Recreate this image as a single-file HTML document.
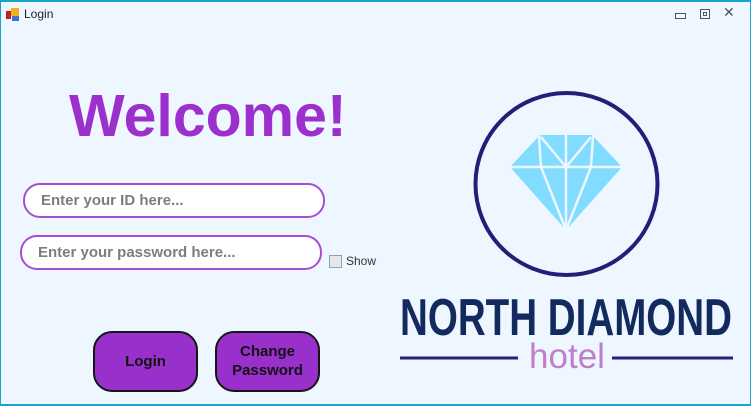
<!DOCTYPE html>
<html><head><style>
body{margin:0;width:751px;height:406px;overflow:hidden;background:#eef7ff;font-family:"Liberation Sans",sans-serif;position:relative}
.frame{position:absolute;inset:0;border:1px solid #19a3cf;border-top:2px solid #19a3cf;border-bottom:2px solid #19a3cf;box-sizing:border-box}
.a{position:absolute}
.inp{position:absolute;width:298px;height:31px;border:2px solid #a24fd3;border-radius:17px;background:#fff;box-sizing:content-box}
.inp span{position:absolute;left:16px;top:7px;color:#7d7d7d;font-weight:bold;font-size:15px}
.btn{position:absolute;width:101px;height:57px;border:2px solid #151515;border-radius:19px;background:#9a30cc;color:#111;font-weight:bold;font-size:15px;text-align:center;box-sizing:content-box}
</style></head><body>
<div class="frame"></div>
<div class="a" style="left:6px;top:8px;width:14px;height:14px">
<div class="a" style="left:0;top:3px;width:5px;height:8px;background:#c02020"></div>
<div class="a" style="left:5px;top:0;width:8px;height:8px;background:#f0b020"></div>
<div class="a" style="left:6px;top:8px;width:7px;height:5px;background:#4070d0"></div>
</div>
<div class="a" style="left:24px;top:7px;font-size:12px;color:#222">Login</div>
<div class="a" style="left:675px;top:13px;width:9px;height:4px;border:1px solid #555"></div>
<div class="a" style="left:700px;top:9px;width:8px;height:8px;border:1px solid #555"><div class="a" style="left:2px;top:2px;width:2px;height:2px;border:1px solid #555"></div></div>
<div class="a" style="left:723px;top:4px;font-size:14px;color:#555">✕</div>
<div class="a" style="left:69px;top:82px;font-size:59px;font-weight:bold;color:#9b30cc;letter-spacing:0px">Welcome!</div>
<div class="inp" style="left:23px;top:183px"><span>Enter your ID here...</span></div>
<div class="inp" style="left:20px;top:235px"><span>Enter your password here...</span></div>
<div class="a" style="left:329px;top:255px;width:11px;height:11px;border:1px solid #8aa0c0;background:#e8e8e8"></div>
<div class="a" style="left:346px;top:254px;font-size:12px;color:#333">Show</div>
<div class="btn" style="left:93px;top:331px;line-height:57px">Login</div>
<div class="btn" style="left:215px;top:331px;line-height:19px;padding-top:0"><div style="margin-top:9px">Change<br>Password</div></div>
<svg class="a" style="left:0;top:0" width="751" height="406">
<circle cx="566.5" cy="184" r="91" fill="none" stroke="#241e78" stroke-width="4"/>
<polygon points="540,135 592,135 622,167 566,230 510,167" fill="#82dcff"/>
<g stroke="#eef7ff" stroke-width="2.5" fill="none">
<line x1="510" y1="167" x2="622" y2="167"/>
<line x1="566" y1="135" x2="566" y2="230"/>
<line x1="539" y1="136" x2="541" y2="167"/><line x1="593" y1="136" x2="591" y2="167"/>
<line x1="541" y1="137" x2="566" y2="167"/><line x1="591" y1="137" x2="566" y2="167"/>
<line x1="541" y1="167" x2="566" y2="230"/><line x1="591" y1="167" x2="566" y2="230"/>
</g>
<line x1="400" y1="358" x2="518" y2="358" stroke="#2a1f80" stroke-width="3"/>
<line x1="612" y1="358" x2="733" y2="358" stroke="#2a1f80" stroke-width="3"/>
<text x="567" y="368" text-anchor="middle" font-family="Liberation Sans" font-size="35" fill="#c07ec8">hotel</text>
<text x="400" y="335" font-family="Liberation Sans Narrow, Liberation Sans" font-weight="bold" font-size="52" fill="#132a5e" textLength="332" lengthAdjust="spacingAndGlyphs">NORTH DIAMOND</text>
</svg>
</body></html>
